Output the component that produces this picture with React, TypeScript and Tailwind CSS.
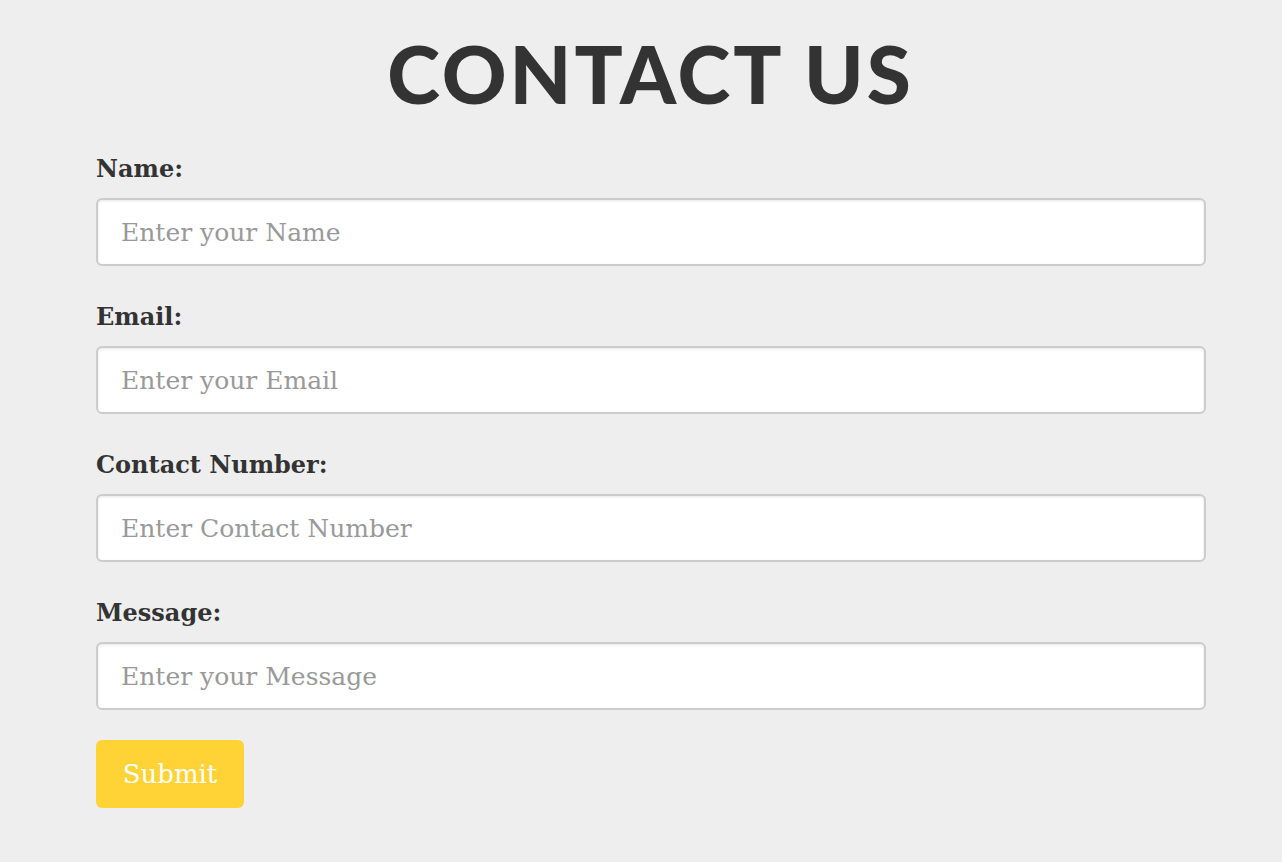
const fields = [
  { label: "Name:", placeholder: "Enter your Name", type: "text" },
  { label: "Email:", placeholder: "Enter your Email", type: "email" },
  { label: "Contact Number:", placeholder: "Enter Contact Number", type: "text" },
  { label: "Message:", placeholder: "Enter your Message", type: "text" },
];

const App = () => {
  return (
    <div className="min-h-[862px] w-full bg-[#eeeeee] pt-[33px]">
      <h1 className="pl-[19px] text-center text-[80px] leading-none font-black tracking-[3px] text-[#333333] [font-family:Lato,sans-serif]">
        CONTACT US
      </h1>
      <form
        className="ml-[96px] mt-[41px] w-[1110px] [font-family:'DejaVu_Serif',serif]"
        onSubmit={(e) => e.preventDefault()}
      >
        <div className="flex flex-col gap-[36px]">
          {fields.map((f) => (
            <div key={f.label}>
              <label className="block text-[24px] leading-[30px] font-bold text-[#333333]">
                {f.label}
              </label>
              <input
                type={f.type}
                placeholder={f.placeholder}
                className="mt-[14px] block h-[68px] w-full rounded-[6px] border-2 border-[#cccccc] bg-white px-[23px] text-[25px] text-[#333333] placeholder-[#999999] shadow-[inset_0_1px_3px_rgba(0,0,0,0.1)] outline-none"
              />
            </div>
          ))}
        </div>
        <button
          type="submit"
          className="mt-[30px] h-[68px] w-[148px] rounded-[6px] bg-[#ffd335] text-[26px] text-white"
        >
          Submit
        </button>
      </form>
    </div>
  );
};

export default App;
